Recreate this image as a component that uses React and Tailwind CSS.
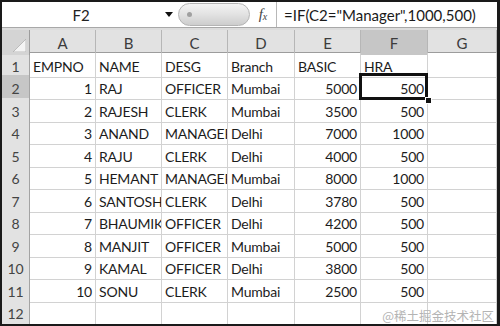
const cols = ["A", "B", "C", "D", "E", "F", "G"];

const rows = [
  ["EMPNO", "NAME", "DESG", "Branch", "BASIC", "HRA"],
  [1, "RAJ", "OFFICER", "Mumbai", 5000, 500],
  [2, "RAJESH", "CLERK", "Mumbai", 3500, 500],
  [3, "ANAND", "MANAGER", "Delhi", 7000, 1000],
  [4, "RAJU", "CLERK", "Delhi", 4000, 500],
  [5, "HEMANT", "MANAGER", "Mumbai", 8000, 1000],
  [6, "SANTOSH", "CLERK", "Delhi", 3780, 500],
  [7, "BHAUMIK", "OFFICER", "Delhi", 4200, 500],
  [8, "MANJIT", "OFFICER", "Mumbai", 5000, 500],
  [9, "KAMAL", "OFFICER", "Delhi", 3800, 500],
  [10, "SONU", "CLERK", "Mumbai", 2500, 500],
  [],
];

const gridCols = "grid grid-cols-[28px_66px_66px_66px_67px_66px_67px_1fr]";

function FormulaBar() {
  return (
    <div className="flex h-[26px] bg-white border-b border-[#a8a8a8]">
      <div className="w-[158px] flex items-center justify-center text-[15px] text-[#222] pt-[2px]">F2</div>
      <div className="w-[18px] flex items-center justify-center">
        <svg width="8" height="5" viewBox="0 0 8 5">
          <path d="M0 0 H8 L4 5 Z" fill="#111" />
        </svg>
      </div>
      <div className="w-[72px] my-[1px] rounded-full bg-gradient-to-b from-[#f4f4f4] via-[#e2e2e2] to-[#cdcdcd] border border-[#b4b4b4] flex items-center pl-[8px]">
        <div className="w-[5px] h-[5px] rounded-full bg-[#a0a0a0]" />
      </div>
      <div className="w-[27px] flex items-center justify-center border-r border-[#b8b8b8] text-[15px] italic text-[#444] font-['Liberation_Serif',serif]">
        f<span className="text-[10px] mt-[4px]">x</span>
      </div>
      <div className="flex-1 flex items-center pl-[7px] pt-[2px] text-[15px] text-[#1a1a1a] whitespace-nowrap">
        =IF(C2="Manager",1000,500)
      </div>
    </div>
  );
}

function HeaderRow() {
  return (
    <div className={`${gridCols} h-[23px] bg-[#e2e2e2] border-b border-[#9c9c9c]`}>
      <div className="relative border-r border-[#9c9c9c] bg-[#d4d4d4]">
        <svg className="absolute right-[3px] bottom-[3px]" width="13" height="13" viewBox="0 0 13 13">
          <path d="M13 0 V13 H0 Z" fill="#f4f4f4" stroke="#b0b0b0" strokeWidth="0.8" />
        </svg>
      </div>
      {cols.map((c) => (
        <div
          key={c}
          className={`flex items-center justify-center pt-[2px] text-[15px] text-[#3c3c3c] border-r border-[#b6b6b6] ${
            c === "F" ? "bg-[#c6c6c6]" : ""
          }`}
        >
          {c}
        </div>
      ))}
    </div>
  );
}

function Cell({ value, selected }) {
  const num = typeof value === "number";
  return (
    <div className="relative border-r border-b border-[#d2d2d2]">
      <div
        className={`flex items-center h-full pt-[3px] overflow-hidden whitespace-nowrap text-[14px] tracking-[-0.2px] text-[#1c1c1c] ${
          num ? "justify-end pr-[3px]" : "pl-[3px]"
        }`}
      >
        {value}
      </div>
      {selected && (
        <div className="absolute z-10 -left-[2px] -top-[2px] right-[-1px] bottom-[-1px] border-[3px] border-[#111]">
          <div className="absolute right-[-7px] bottom-[-7px] w-[7px] h-[7px] bg-[#111] border border-white" />
        </div>
      )}
    </div>
  );
}

export default function App() {
  return (
    <div className="relative w-[500px] h-[326px] overflow-hidden bg-white border-t-2 border-l-2 border-r-[3px] border-b-2 border-[#1a1a1a] font-['Lato',sans-serif]">
      <FormulaBar />
      <div className="h-[2px] bg-[#dcdcdc]" />
      <HeaderRow />
      {rows.map((r, i) => (
        <div key={i} className={`${gridCols} ${i % 2 === 0 ? "h-[22px]" : "h-[23px]"}`}>
          <div
            className={`flex items-center justify-center pt-[3px] text-[14px] text-[#444] border-r border-b border-[#a4a4a4] ${
              i === 1 ? "bg-[#c6c6c6]" : "bg-[#e2e2e2]"
            }`}
          >
            {i + 1}
          </div>
          {cols.map((c, j) => (
            <Cell key={c} value={r[j]} selected={i === 1 && j === 5} />
          ))}
        </div>
      ))}
      <div className="absolute right-[3px] bottom-[2px] text-[12.5px] text-[#b4b4b4] font-['Noto_Sans_CJK_SC',sans-serif] leading-none">
        @稀土掘金技术社区
      </div>
    </div>
  );
}
